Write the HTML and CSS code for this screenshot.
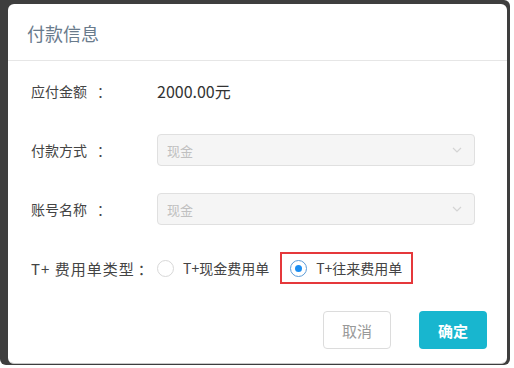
FILE: index.html
```html
<!DOCTYPE html>
<html lang="zh-CN">
<head>
    <meta charset="UTF-8">
    <meta name="viewport" content="width=device-width, initial-scale=1.0">
    <title>付款信息</title>
    <link rel="stylesheet" href="styles.css">
</head>
<body>
    <div class="backdrop">
        <div class="modal">
            <div class="modal-header">
                <h2>付款信息</h2>
            </div>
            <div class="modal-body">
                <div class="form-row">
                    <label>应付金额<span class="colon">：</span></label>
                    <span class="amount">2000.00元</span>
                </div>
                <div class="form-row">
                    <label>付款方式<span class="colon">：</span></label>
                    <div class="select">
                        <span>现金</span>
                        <svg class="arrow" width="10" height="6" viewBox="0 0 10 6"><path d="M1 1l4 4 4-4" fill="none" stroke="#d4d4d4" stroke-width="1.2"/></svg>
                    </div>
                </div>
                <div class="form-row">
                    <label>账号名称<span class="colon">：</span></label>
                    <div class="select">
                        <span>现金</span>
                        <svg class="arrow" width="10" height="6" viewBox="0 0 10 6"><path d="M1 1l4 4 4-4" fill="none" stroke="#d4d4d4" stroke-width="1.2"/></svg>
                    </div>
                </div>
                <div class="form-row">
                    <label class="wide">T+ 费用单类型<span class="colon">：</span></label>
                    <div class="radio">
                        <span class="radio-dot"></span>
                        <span>T+现金费用单</span>
                    </div>
                    <div class="radio checked highlight">
                        <span class="radio-dot"></span>
                        <span>T+往来费用单</span>
                    </div>
                </div>
            </div>
            <div class="modal-footer">
                <button class="btn btn-cancel">取消</button>
                <button class="btn btn-ok">确定</button>
            </div>
        </div>
    </div>
</body>
</html>
```

FILE: styles.css
```css
body {
    margin: 0;
    padding: 0;
    background-color: #fff;
    font-family: "Noto Sans CJK SC", "Noto Sans", sans-serif;
}
.backdrop {
    width: 499px;
    height: 361px;
    padding: 4px 3px 0 8px;
    background-color: #3e3e3e;
    border-radius: 0 6px 6px 6px;
}
.modal {
    height: 359px;
    background: white;
    border-radius: 6px;
    border-bottom: 1px solid #c9c9c9;
}
.modal-header {
    height: 56px;
    border-bottom: 1px solid #e6e6e6;
    padding-left: 19px;
}
.modal-header h2 {
    margin: 0;
    font-size: 18px;
    font-weight: normal;
    line-height: 58px;
    color: #697b8c;
}
.modal-body {
    padding: 14px 32px 0 23px;
}
.form-row {
    display: flex;
    align-items: center;
    height: 32px;
    margin-bottom: 27px;
    font-size: 14px;
    color: #444;
}
.form-row label {
    width: 126px;
    flex: none;
    font-size: 14px;
}
.form-row label.wide {
    font-size: 15px;
    letter-spacing: 1px;
}
.colon {
    margin-left: 10px;
}
.wide .colon {
    margin-left: 3px;
}
.amount {
    font-size: 16px;
    color: #333;
}
.select {
    flex: 1;
    height: 30px;
    display: flex;
    align-items: center;
    justify-content: space-between;
    padding: 0 12px 0 9px;
    background-color: #f5f5f5;
    border: 1px solid #e0e0e0;
    border-radius: 4px;
    font-size: 13px;
    color: #c0c0c0;
}
.radio {
    display: flex;
    align-items: center;
    gap: 9px;
    margin-right: 13px;
    color: #444;
}
.radio-dot {
    width: 15px;
    height: 15px;
    border: 1px solid #d8d8d8;
    border-radius: 50%;
    display: flex;
    align-items: center;
    justify-content: center;
}
.radio.checked .radio-dot {
    border-color: #5b9bd8;
}
.radio.checked .radio-dot::after {
    content: "";
    width: 7px;
    height: 7px;
    border-radius: 50%;
    background-color: #1b8ef2;
}
.highlight {
    border: 2px solid #e5383b;
    padding: 4px 9px 4px 8px;
    margin-left: -2px;
}
.modal-footer {
    display: flex;
    justify-content: flex-end;
    gap: 28px;
    padding-right: 20px;
}
.btn {
    width: 68px;
    height: 38px;
    border-radius: 4px;
    font-family: inherit;
    font-size: 15px;
}
.btn-cancel {
    background: white;
    border: 1px solid #dcdcdc;
    color: #999;
}
.btn-ok {
    background-color: #18b6cf;
    border: none;
    color: white;
    font-weight: bold;
}
```
